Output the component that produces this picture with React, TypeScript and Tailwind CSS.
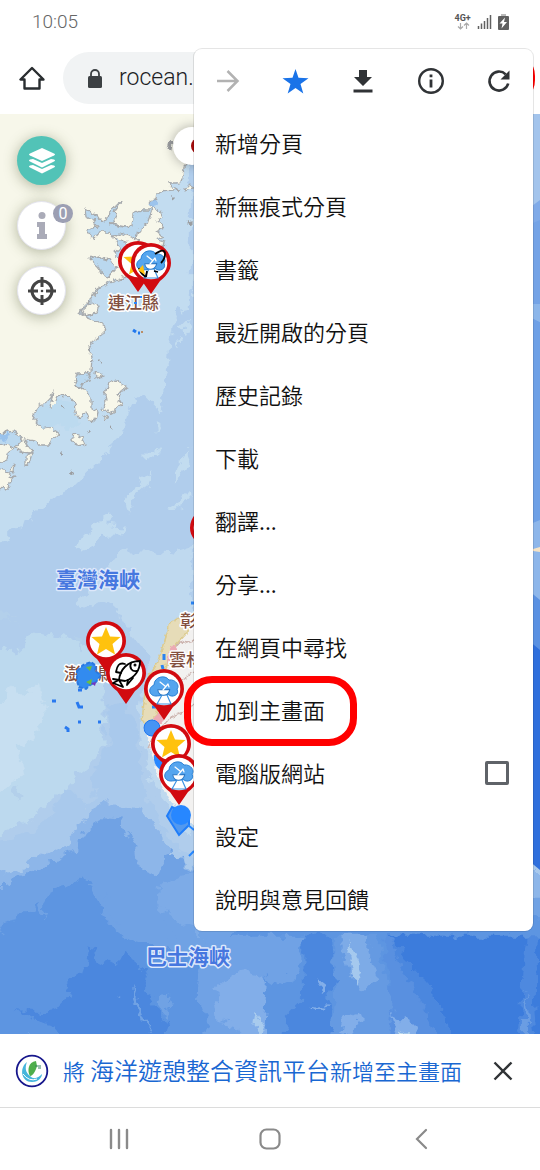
import type { ReactNode } from "react";

const CJK = "font-['Noto_Sans_CJK_TC',sans-serif]";

const menuItems = [
  "新增分頁",
  "新無痕式分頁",
  "書籤",
  "最近開啟的分頁",
  "歷史記錄",
  "下載",
  "翻譯...",
  "分享...",
  "在網頁中尋找",
  "加到主畫面",
  "電腦版網站",
  "設定",
  "說明與意見回饋",
];

function Pin({ x, y, children }: { x: number; y: number; children: ReactNode }) {
  return (
    <g transform={`translate(${x} ${y})`}>
      <path d="M-20 0A20 20 0 1 1 20 0C20 8 14 14 9 18L0 31L-9 18C-14 14-20 8-20 0Z" fill="#d10a10" />
      <circle r="16.3" fill="#fff" />
      {children}
    </g>
  );
}

function Star() {
  return <path d="M0-14L4-4.500L14.500-4L6.500 3L9 13.500L0 8L-9 13.500L-6.500 3L-14.500-4L-4-4.500Z" fill="#ffc20e" />;
}

function Dish() {
  return (
    <g strokeLinecap="round" strokeLinejoin="round">
      <path d="M-7 7C-15 8-17-1-10-4C-10-12 1-15 5-9C12-10 16-3 13 0C16 6 8 9 5 6Z" fill="#55a5ee" stroke="#2b82d6" strokeWidth="1" />
      <path d="M-2 6L-7 15H7L3 6Z" fill="#fff" stroke="#3c93e3" strokeWidth="1.2" />
      <path d="M-6-2C-8 5 0 9 5 3Z" fill="#fff" stroke="#2c78c4" strokeWidth="1" transform="rotate(-25)" />
      <path d="M-1 1L4-5M-4-7L1-3M4-5l1 3" fill="none" stroke="#fff" strokeWidth="1.200" />
    </g>
  );
}

function Fish() {
  return (
    <g fill="#fff" stroke="#000" strokeWidth="1.800" strokeLinejoin="round" strokeLinecap="round">
      <path d="M-7 7C-6-3 1-12 14-12C14-3 9 5-1 8L-7 7L-3 14L-13 10Z" />
      <path d="M-1-9C-7-11-9-7-10-1L-5 0M5-10C3-5 6-1 11-2M2 7L1 12L7 5M-13 6L-7 7" fill="none" />
      <circle cx="9" cy="-8" r=".6" />
    </g>
  );
}

function SeaMap() {
  return (
    <svg className="absolute inset-0 h-full w-full" viewBox="0 114 540 920" preserveAspectRatio="xMinYMin slice" aria-hidden="true">
      <defs>
        <filter id="contour" filterUnits="userSpaceOnUse" x="-10" y="90" width="570" height="970" colorInterpolationFilters="sRGB">
          <feTurbulence type="fractalNoise" baseFrequency="0.09" numOctaves="3" seed="4" />
          <feDisplacementMap in="SourceGraphic" scale="16" xChannelSelector="R" yChannelSelector="G" />
        </filter>
        <filter id="shore" filterUnits="userSpaceOnUse" x="-10" y="90" width="570" height="970" colorInterpolationFilters="sRGB">
          <feTurbulence type="fractalNoise" baseFrequency="0.18" numOctaves="2" seed="7" />
          <feDisplacementMap in="SourceGraphic" scale="7" xChannelSelector="R" yChannelSelector="G" />
        </filter>
      </defs>
      <rect y="114" width="540" height="920" fill="#b0cdec" />
      <g filter="url(#contour)" transform="translate(-8 -18) scale(1.03)">
        <rect y="114" width="540" height="920" fill="#b0cdec" />
        {/* shallow shelf */}
        <path d="M0 114H194V318L186 320L181 315L174 340L172 368L167 393L162 417L157 410L147 400L135 408L130 425L118 448L104 468L90 480L78 492L60 500L42 517L22 530L6 546L0 552Z" fill="#c2dcf0" />
        <path d="M184 333l7-7 3 9-6 8zM180 345l5 5-5 5zM159 425l6 6-5 7zM150 456l13 1-5 5-8-2zM129 502l6-10 8-1 5-14 7-2-4 14-10 9-3 14-7 4zM194 452l-13 18-5 15 7-5 11-19zM173 510l9-5 7-11 1 10-11 8zM80 551l6-12 11-9 10-11 7-4-1 12 19 2-8 9-17 3-7 9-13 3zM8 538l8 1-7 3z" fill="#c2dcf0" />
        <path d="M125 553L160 553L176 555L194 549V828L180 815L155 776L145 738L142 718L145 692L150 674L152 656L145 645L133 630L123 612L111 602L96 610L82 600L98 586Z" fill="#bfd9ef" />
        <path d="M0 656L11 645L22 652L45 630L73 638L105 649L110 716L108 737L98 756L91 768L82 766L78 784L61 791L49 801L38 813L20 820L0 835Z" fill="#bcd9ee" />
        <path d="M20 684L31 691L45 680L52 708L39 737L26 741L31 769L12 783L0 790V700L11 700Z" fill="#c7dff1" />
        <path d="M20 784l6-4 5 8-6 7-6-5zM5 611l18 1-9 3 16 11-12-7-16-1zM81 633l7 5-5 10z" fill="#b3d0eb" />
        {/* successive depth bands */}
        <path d="M0 836L28 831L49 820L60 805L72 784L79 785L92 799L100 785L97 773L107 752L112 730L111 705L128 700L141 733L142 754L151 786L166 819L185 845L194 849H540V1034H0Z" fill="#a9c9ec" />
        <path d="M0 867L26 861L46 849L69 840L85 818L99 806L108 796L126 801L145 804L159 822L171 842L185 854L202 866H540V1034H0Z" fill="#8db6e9" />
        <path d="M0 878L16 876L30 867L44 859L60 855L66 848L81 842L91 824L106 812L126 813L137 838L139 860L154 866L166 859L173 844L189 859L213 882L270 888H540V1034H0Z" fill="#70a2e4" />
        <path d="M0 918L7 925L14 912L24 910L38 901L44 895L48 907L55 881L71 877L86 868L93 873L101 889L109 908L119 921L130 929L141 932L152 932L163 944L177 938L184 947L193 943L203 955L218 948L236 921L262 895L291 887L329 908H540V1034H0Z" fill="#5d95e1" />
        <path d="M22 998L44 1001L65 997L77 983L73 970L91 958L93 936L103 947L120 956L127 943L142 951L152 985L162 999L169 1012L164 1034H70L60 1013L42 1009Z" fill="#4b87de" />
        <path d="M100 871l10 16 6 20 8 9-8-6-8-17zM166 911l13 17-3 12-10-15zM136 971l7 22 12 27-9-11-9-22zM160 985l15-2-8 22zM120 983l8 4-2-3zM35 1021l9 2-4 2z" fill="#70a2e4" />
        <path d="M162 877C174 868 185 865 201 865V926C183 911 164 907 161 891Z" fill="#7dabe7" />
        {/* ridges in the southern sea */}
        <path d="M205 926L302 926L296 965L276 974L265 966L255 1034H202L210 1006L199 990L202 958Z" fill="#70a2e5" />
        <path d="M217 979C224 963 253 956 267 970L264 1010L270 1034H249L239 1014L222 1011Z" fill="#82aee9" />
        <path d="M256 1000l7 12-3 8-6-8z" fill="#a8cbee" />
        <path d="M302 926H330L333 970L323 989L333 1010L323 1034H283L286 1003L303 986Z" fill="#4b87de" />
        <path d="M332 926H374L382 970L392 991L393 1034H325L333 989Z" fill="#659ae2" />
        <path d="M338 926H363L373 970L360 980L345 958Z" fill="#7dabe7" />
        <path d="M349 932l7 17 3 16-7 7-5-23z" fill="#a5c9ee" />
        <path d="M340 1008C348 997 356 999 357 1010L349 1022L338 1019ZM317 970l9 7-5 5zM311 993l14 1-5 3z" fill="#82aee9" />
        <path d="M379 926H402L427 990L440 1034H385L388 993Z" fill="#5990e0" />
        <path d="M388 1001L411 1014L415 1034H398Z" fill="#82aee9" />
        <path d="M397 1019l5 3-5-8 9 13-5 5z" fill="#bfdcec" />
        <path d="M386 926H540V1034H452L441 1009L420 969L402 949Z" fill="#3c7cdc" />
        <path d="M386 926L402 949L420 969L441 1009L452 1034H440L407 974Z" fill="#4b87de" />
        <path d="M519 926H528L526 984L529 1034H511L514 979Z" fill="#4e89df" />
        <path d="M517 980l4 21 1 33h-6z" fill="#6a9de3" />
      </g>
      {/* eastern strip */}
      <path d="M528 114H540V210L528 214Z" fill="#a3c4ec" />
      <path d="M528 209L540 200V305H528Z" fill="#7faae8" />
      <path d="M528 225L540 220V310H528Z" fill="#74a3e6" />
      <path d="M528 304H540V322L528 316Z" fill="#8cb6ea" />
      <path d="M528 316L540 322V530H528Z" fill="#6ea0e6" />
      <path d="M528 525L540 520V600H528Z" fill="#8db6ea" />
      <path d="M533 549l7-2v5l-7-1z" fill="#f6e3c5" />
      <path d="M528 590L540 600V650H528Z" fill="#5a91e2" />
      <path d="M528 640L540 650V870L528 860Z" fill="#2f6fdc" />
      {/* mainland coast */}
      <g filter="url(#shore)">
        <g fill="#f7f7ea" stroke="#a7aaad" strokeWidth="1.300" strokeLinejoin="round">
          <path d="M-8 100H206V163L187 163L184 166L183 178L178 183L169 183L173 188L180 190L173 191L158 192L157 199L149 201L151 207L160 211L163 217L157 221L164 227L157 231L163 237L157 240L164 242L162 253L135 273L120 279L104 285L96 291L91 299L83 307L79 312L88 318L98 322L105 326L104 334L93 341L89 349L92 358L91 371L86 373L77 373L75 381L79 388L85 389L91 399L91 409L98 412L96 421L90 420L86 411L82 416L77 417L75 404L69 397L61 395L57 398L55 407L50 407L53 391L48 402L40 405L32 415L37 422L42 428L50 427L60 434L52 438L50 445L38 445L34 441L24 439L28 447L33 450L31 453L20 452L17 448L8 453L7 460L-8 466Z" />
          <path d="M108 382L105 394L106 402L102 409L110 413L115 410L123 405L119 402L121 396L118 395L121 391L128 388L121 384L115 379ZM73 434L83 438L86 444L78 446L72 439ZM-8 467L9 472L8 478L15 477L9 484L8 489L-8 488ZM91 302l8 4-2 7-12 3-4-5zM26 456l7-4-3 9-4 5zM10 471l5-8-1 9zM104 416l4 2-4 2zM95 372l9 4-8 2zM184 188l8-4 2 4-9 3z" />
        </g>
        <g fill="#bad8ef" stroke="#a7aaad" strokeWidth="1.300" strokeLinejoin="round">
          <path d="M85 209L94 213L99 220L107 221L109 213L113 207L121 203L115 211L117 219L110 224L124 227L132 226L133 214L142 210L152 210L147 224L139 230L137 240L128 236L120 233L113 238L109 232L99 232L93 239L87 232L91 228L98 227L93 220L86 217Z" />
          <path d="M89 258L99 256L104 260L111 259L116 268L108 277L101 274L98 266ZM114 238L126 242L128 249L120 260L114 253L120 248ZM75 376L82 373L90 374L88 381L84 382L80 389L76 384ZM-8 434L15 431L22 440L15 448L6 445L-8 442Z" />
        </g>
        <path d="M34 413L43 405L52 407L59 399L72 403L76 413L79 423L68 431L59 423L51 427L41 428L39 421Z" fill="#bcdaef" />
        <path d="M148 204l6-5 3 4-4 6zM-6 434h16l-5 8z" fill="#8bb9eb" opacity=".7" />
        <path d="M169 139l3 3-1 8-4-2zM88 345l3 5-2 2zM99 361l2 1zM62 405l2 4-2-2zM110 427l3 2zM86 431l5 2zM59 453l3 1zM70 471l5 3-4-1zM171 197h3v2zM188 221l3-1v5z" fill="#9b9da0" stroke="#9b9da0" strokeWidth="1" />
      </g>
      <path d="M133 330l3 2M138 333h2" stroke="#2178ee" strokeWidth="3" />
      <path d="M141 332h2" stroke="#bb8f68" strokeWidth="2" />
      {/* Taiwan's west coast */}
      <g filter="url(#shore)">
        <path d="M206 606L181 618L171 621L165 640L158 661L150 674L145 692L142 718L146 735L151 753L158 775L169 798L184 817L206 835Z" fill="#f2f1f0" />
        <path d="M187 614L171 621L165 640L158 661L150 674L145 692L142 722L153 724L158 706L163 680L171 650L187 633Z" fill="#e6dcb8" stroke="#dccb8f" strokeWidth="1.500" />
        <path d="M169 650l5-7 3 5-7 14-3 1zM155 716l6-6 2 10-6 8z" fill="#ecaab4" />
        <path d="M165 700L175 684L194 672M176 645L194 640M160 731L170 717L184 712L194 704M148 748l5-10 8-1" fill="none" stroke="#cdb5b0" strokeWidth="1.300" />
      </g>
      <path d="M191 603h3M184 619h4M164 654v6M162 665l1 4M152 707h6" stroke="#2a83f2" strokeWidth="3" />
      <g fill="#2787ff">
        <circle cx="152" cy="728" r="8" fill="#4794f4" stroke="#1e77f1" />
        <path d="M154 755h13v16c-10 0-14-8-13-16z" />
        <path d="M167 816L172 807L189 815L189 825L179 835Z" fill="#5399ef" stroke="#1f7dfa" strokeWidth="2" />
        <circle cx="181" cy="815" r="10" />
        <path d="M188 825l6 5M189 856l5-5" stroke="#2787ff" strokeWidth="2" />
      </g>
      <g stroke="#2879ef" strokeWidth="3" fill="none">
        <path d="M52 701h4M77 702l2 5h4M78 722h3M65 727l3 2v3M98 722h3M78 690h4" />
      </g>

      <g className="font-['Noto_Sans_CJK_TC',sans-serif]" paintOrder="stroke" strokeLinejoin="round">
        <g fontSize="17" fontWeight="500" fill="#83503f" stroke="#fff" strokeWidth="3">
          <text x="108" y="309">連江縣</text>
          <text x="64" y="680">澎湖縣</text>
          <text x="169" y="666">雲林縣</text>
          <text x="180" y="627">彰化縣</text>
        </g>
        <g fontSize="21" fontWeight="700" fill="#4677df" stroke="#dde8fb" strokeWidth="3">
          <text x="56" y="587">臺灣海峽</text>
          <text x="146" y="964">巴士海峽</text>
        </g>
      </g>
      <path d="M77 671l6-6 8-3 5 4-1 5 6 4-5 7-6 3-4 4-7-2-2-6z" fill="#328bef" stroke="#2978e0" strokeWidth="2" strokeDasharray="4 2" />
      <path d="M86 667l6-1-2 5zM86 682l6-3-1 6z" fill="#6cbd43" />
      <path d="M91 683l5-1-1 4z" fill="#7435bb" />
      <path d="M140 297h2M134 303h3" stroke="#2787ff" strokeWidth="2" />

      <Pin x={210} y={528}><circle r="1" fill="#fff" /></Pin>
      <Pin x={138} y={261}><Star /></Pin>
      <Pin x={151} y={263}>
        <Dish />
        <path d="M-12 5C-10 12-7 12-5 14M4-9C10-13 14-14 14-9C14-5 12-2 10 0M-4 8L-5 14M3 8L7 9" fill="none" stroke="#000" strokeWidth="1.800" />
        <path d="M-13 7l5-5 2 10z" fill="#ffc20e" />
      </Pin>
      <Pin x={106} y={641}><Star /></Pin>
      <Pin x={126} y={673}><Fish /></Pin>
      <Pin x={164} y={689}><Dish /></Pin>
      <Pin x={171} y={744}><Star /></Pin>
      <Pin x={179} y={774}><Dish /></Pin>
    </svg>
  );
}

export default function App() {
  return (
    <div className="relative flex min-h-screen w-full flex-col overflow-hidden bg-white">
      <header className="font-[Roboto,sans-serif]">
        <div className="flex h-11 items-center justify-between pr-[30px] pl-8">
          <time className="text-[19px] font-[350] text-[#666]">10:05</time>
          <svg className="h-5 w-14" viewBox="454 11 56 20" role="img" aria-label="4G+, charging">
            <text x="454.500" y="20" fontSize="9" fontWeight="700" fill="#555">4G+</text>
            <path d="M460.500 22v6M458 25.500l2.500 2.500 2.500-2.500M466.500 28v-6M464 24.500l2.500-2.500 2.500 2.500" fill="none" stroke="#aaa" strokeWidth="1.200" />
            <path d="M478.500 28v-3M481.500 28v-5.500M484.500 28v-8M487.500 28v-11M490.500 28v-14" stroke="#606060" strokeWidth="1.500" />
            <path d="M501 13h5v2h-5z" fill="#bbb" />
            <rect x="498" y="15" width="11" height="14" rx="1" fill="#606060" />
            <path d="M505 16.500l-5.500 6h3l-1 5 5.500-6.500h-3z" fill="#fff" />
          </svg>
        </div>
        <div className="flex h-[70px] items-start gap-[18px] pt-2 pr-[5px] pl-[19px]">
          <button type="button" aria-label="首頁" className="flex h-[52px] items-center">
            <svg className="size-[26px]" viewBox="0 0 26 26" fill="none" stroke="#292d30" strokeWidth="2.400" strokeLinejoin="round">
              <path d="M1.500 14.500H5.500V23.500H20.500V14.500H24.500L13 3Z" />
            </svg>
          </button>
          <div className="flex h-[52px] flex-1 items-center gap-4 rounded-full bg-[#f1f3f4] pl-6">
            <svg className="h-[19px] w-4" viewBox="0 0 16 19" aria-hidden="true">
              <path d="M4 8V5a4 4 0 0 1 8 0v3" fill="none" stroke="#3c4043" strokeWidth="1.800" />
              <rect x="1" y="7" width="14" height="12" rx="1.500" fill="#3c4043" />
            </svg>
            <span className="text-[23px] font-[350] text-[#202124]">rocean.</span>
          </div>
          <button type="button" aria-label="更多" className="-ml-20 h-[52px] w-[63px] rounded-3xl border-[6px] border-[#f00]" />
        </div>
      </header>

      <main className="relative min-h-[920px] flex-1 overflow-hidden">
        <SeaMap />
        <div className="absolute top-[13px] left-[173px] flex size-[38px] items-center justify-end rounded-full bg-white pr-1 shadow-[0_0_12px_rgba(0,0,0,0.3)]">
          <span className="size-4 rounded-full bg-[#a30b0b]" />
        </div>
        <div className="absolute top-[22px] left-[17px] flex flex-col gap-4">
          <button type="button" aria-label="圖層" className="flex size-[49px] items-center justify-center rounded-full bg-[#52c3b7] shadow-[0_2px_14px_rgba(70,80,40,0.4)]">
            <svg className="size-7" viewBox="0 0 28 28" fill="#fff">
              <path d="M14 1L26 6.500Q28 7.500 26 8.500L14 14L2 8.500Q0 7.500 2 6.500Z" />
              <path d="M2 12.500L5 12L14 16L23 12L26 12.500Q28 13.500 26 14.500L14 20.500L2 14.500Q0 13.500 2 12.500ZM2 18.500L5 18L14 22L23 18L26 18.500Q28 19.500 26 20.500L14 26.500L2 20.500Q0 19.500 2 18.500Z" />
            </svg>
          </button>
          <button type="button" aria-label="資訊 0" className="relative flex size-[49px] items-center justify-center rounded-full border border-[#e4e4ee] bg-white shadow-[0_2px_14px_rgba(70,80,40,0.4)]">
            <svg className="h-[27px] w-3" viewBox="0 0 12 27" fill="#aaabb8">
              <circle cx="6" cy="3.500" r="3.500" />
              <path d="M1 10h8v12h2v5H1v-5h2v-7H1z" />
            </svg>
            <span className="absolute top-0.5 -right-2 flex h-[19px] w-5 items-center justify-center rounded-full bg-[#9c9fb3] font-[Roboto,sans-serif] text-base text-white">0</span>
          </button>
          <button type="button" aria-label="定位" className="flex size-[49px] items-center justify-center rounded-full border border-[#e4e4ee] bg-white shadow-[0_2px_14px_rgba(70,80,40,0.4)]">
            <svg className="size-7" viewBox="0 0 28 28" fill="none" stroke="#444" strokeWidth="3">
              <circle cx="14" cy="14" r="10" />
              <path d="M14 0v10M14 18v10M0 14h10M18 14h10" />
              <circle cx="14" cy="14" r="1.300" fill="#444" stroke="none" />
            </svg>
          </button>
        </div>
      </main>

      <aside className="flex h-[73px] items-center justify-between bg-white pr-[27px] pl-[15px]">
        <div className="flex items-center gap-[14px]">
          <svg className="size-[34px]" viewBox="0 0 34 34" aria-hidden="true">
            <circle cx="17" cy="17" r="15.300" fill="#fff" stroke="#17178c" strokeWidth="1.800" />
            <path d="M12 8C4 14 6 28 17 28C24 28 27 23 27 20C23 24 19 26 15 22C10 18 10 13 12 8Z" fill="#45b5dc" />
            <path d="M21 7C13 8 12 17 15 22C18 22 21 16 22 12Z" fill="#4eae4c" />
            <path d="M8 20q6 8 14 5" fill="none" stroke="#fff" />
            <path d="M20 12h6M23 14h3" stroke="#36845f" />
          </svg>
          <a href="#install" className={`${CJK} pb-0.5 text-[22px] leading-8 font-[350] whitespace-nowrap text-[#1967d2]`}>
            將 <span className="text-2xl leading-8">海洋遊憩整合資訊平台</span>新增至主畫面
          </a>
        </div>
        <button type="button" aria-label="關閉">
          <svg className="size-5" viewBox="0 0 20 20" fill="none" stroke="#303336" strokeWidth="2.400">
            <path d="M1.500 1.500L18.500 18.500M18.500 1.500L1.500 18.500" />
          </svg>
        </button>
      </aside>

      <nav className="flex h-[63px] items-center justify-around border-t border-[#dcdcdc] bg-white px-11">
        <button type="button" aria-label="最近使用">
          <svg className="size-6" viewBox="0 0 24 24" fill="none" stroke="#8a8a8a" strokeWidth="2.400" strokeLinecap="round">
            <path d="M4 3V21M12 3V21M20 3V21" />
          </svg>
        </button>
        <button type="button" aria-label="主畫面">
          <svg className="size-6" viewBox="0 0 24 24" fill="none" stroke="#8a8a8a" strokeWidth="2.200">
            <rect x="2.500" y="2.500" width="19" height="19" rx="6" />
          </svg>
        </button>
        <button type="button" aria-label="返回">
          <svg className="size-6" viewBox="0 0 24 24" fill="none" stroke="#8a8a8a" strokeWidth="2.200" strokeLinecap="round">
            <path d="M17 3L8 12L17 21" />
          </svg>
        </button>
      </nav>

      <div className="absolute top-[49px] right-[7px] w-[339px] rounded-lg bg-white shadow-[0_0_0_1px_rgba(0,0,0,0.1)]">
        <div className="grid h-[63px] grid-cols-5 items-center justify-items-center">
          <button type="button" aria-label="前進">
            <svg className="size-7" viewBox="0 0 28 28" fill="none" stroke="#b2b2b2" strokeWidth="2.500">
              <path d="M3 14H23M13.500 4L23.500 14L13.500 24" />
            </svg>
          </button>
          <button type="button" aria-label="書籤">
            <svg className="size-7" viewBox="0 0 28 28" fill="#1a73e8">
              <path d="M13.500 2L16.500 10.800L26.500 11.200L18.500 17L21.300 26.500L13.500 21L5.700 26.500L8.500 17L.5 11.200L10.500 10.800Z" />
            </svg>
          </button>
          <button type="button" aria-label="下載">
            <svg className="size-7" viewBox="0 0 28 28" fill="#303336">
              <path d="M10 3h8v7h5l-9 9l-9-9h5zM4.500 22.500h19v3h-19z" />
            </svg>
          </button>
          <button type="button" aria-label="網頁資訊">
            <svg className="size-7" viewBox="0 0 28 28" fill="none" stroke="#303336" strokeWidth="2.400">
              <circle cx="14" cy="14" r="11.800" />
              <path d="M14 12.500V20.500M14 7.500V10.300" strokeWidth="2.800" />
            </svg>
          </button>
          <button type="button" aria-label="重新載入">
            <svg className="size-7" viewBox="0 0 28 28" fill="none" stroke="#303336" strokeWidth="2.600">
              <path d="M23.200 16.500A9.500 9.500 0 1 1 20.700 7.300" />
              <path d="M24.500 3.500V12.500H15.500Z" fill="#303336" stroke="none" />
            </svg>
          </button>
        </div>
        <ul className={`${CJK} text-[22px] font-[350] text-[#111]`}>
          {menuItems.map((label) => (
            <li key={label} className="relative h-[63px]">
              {label === "電腦版網站" ? (
                <label className="flex h-full items-center justify-between pr-6 pb-0.5 pl-[21px]">
                  {label}
                  <input type="checkbox" className="size-6 appearance-none rounded-xs border-[3px] border-[#5f6368] bg-white" />
                </label>
              ) : (
                <button type="button" className="flex h-full w-full items-center pb-0.5 pl-[21px] text-left">
                  {label}
                </button>
              )}
              {label === "加到主畫面" && (
                <span className="pointer-events-none absolute -top-[3px] -bottom-1 -left-[10px] w-[173px] rounded-[28px] border-[7px] border-[#f00]" />
              )}
            </li>
          ))}
        </ul>
      </div>
    </div>
  );
}
